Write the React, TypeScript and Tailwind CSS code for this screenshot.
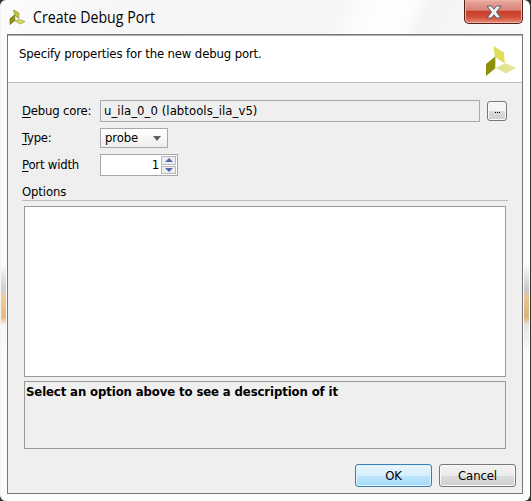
import type { ReactNode } from "react";

function Leaf({ size, small }: { size: number; small?: boolean }) {
  return small ? (
    <svg width={size} height={size} viewBox="0 0 17 17" className="block">
      <path d="M4.5 1 9.8 4 9.8 9.5 6 6.5Z" fill="#c3c633" stroke="#7c7e1e" strokeWidth=".6" />
      <path d="M1 9.5 5.5 6 6 11.5 1 15.5Z" fill="#8f9215" stroke="#62650c" strokeWidth=".6" />
      <path d="M6 12 10.5 10.5 16 12.5 11.5 15Z" fill="#dcdd62" stroke="#8d8f22" strokeWidth=".6" />
    </svg>
  ) : (
    <svg width={size} height={size} viewBox="0 0 31 31" className="block">
      <path d="M7.3 0 18 6.5 18.8 17.5 9 11Z" fill="#dedf58" />
      <path d="M0 18 9.3 10.5V22.2L0 30Z" fill="#8d8f0b" />
      <path d="M9.5 22 19.5 17 30 22 20 27.5Z" fill="#e4e594" />
    </svg>
  );
}

function Label({ hot, children }: { hot?: string; children: ReactNode }) {
  return (
    <span className="w-[78px] shrink-0 tracking-[-0.2px] whitespace-nowrap">
      {hot && <span className="underline underline-offset-2">{hot}</span>}
      {children}
    </span>
  );
}

export default function App() {
  return (
    <div className="flex h-[501px] w-[531px] flex-col overflow-hidden bg-[#333] font-['DejaVu_Sans_Condensed','DejaVu_Sans',sans-serif] text-[13px] leading-4 tracking-[-0.14px] text-black">
      <div className="relative flex h-[501px] w-[530px] flex-col rounded-[6px] border-l border-[#f4f4f4] bg-[#fcfcfc] pr-[7px] pl-[6px]">
        <div className="absolute top-[265px] left-0 h-[90px] w-[5px] bg-[linear-gradient(#fcfcfc,#eaeaea_8px,#cfcfcf_25px,#efcf98_32px,#e8b87a_52px,#f5f5f5_60px,#fcfcfc)]" />
        <div className="absolute top-[265px] right-[1px] h-[90px] w-[5px] bg-[linear-gradient(#fcfcfc,#eaeaea_8px,#c8c8c8_25px,#e8c494_32px,#deb27b_52px,#e5e5e5_60px,#fcfcfc)]" />
        <header className="flex h-[34px] shrink-0 items-start bg-[linear-gradient(115deg,#fcfcfc_0%,#f7f7f7_20%,#f5f5f5_62%,#fdfdfd_69%,#fdfdfd_77%,#f3f5f3_80%,#f8f8f8_100%)] pt-[9px] pl-[2px]">
          <Leaf size={17} small />
          <h1 className="mt-[-1px] ml-[7px] w-[140px] origin-left scale-x-[0.885] font-['Open_Sans','Noto_Sans',sans-serif] text-[16px] leading-[18px] tracking-normal whitespace-nowrap">
            Create Debug Port
          </h1>
          <button aria-label="Close" className="mt-[-9px] mr-0 ml-auto flex h-[24px] w-[59px] items-center justify-center rounded-b-[5px] border border-t-0 border-[#54201b] bg-[linear-gradient(#e9aca3_0,#d98074_45%,#c63c27_48%,#d2503a_75%,#e98b70_100%)] shadow-[inset_0_0_0_1px_#eeb3a7]">
            <svg width="16" height="14" viewBox="0 0 16 14">
              <path d="M1 1H5.5L8 4.2 10.5 1H15L10.5 7 15 13H10.5L8 9.8 5.5 13H1L5.5 7Z" fill="#f1f1f1" stroke="#595b68" />
            </svg>
          </button>
        </header>
        <main className="flex h-[460px] w-[516px] shrink-0 flex-col border border-[#777] bg-[#efefef]">
          <section className="flex h-[48px] shrink-0 items-start border-t border-b border-t-[#b0b0b0] border-b-[#c0c0c0] bg-white pt-[10px] pl-[11px]">
            <p className="whitespace-nowrap">Specify properties for the new debug port.</p>
            <div className="mr-[5px] ml-auto">
              <Leaf size={31} />
            </div>
          </section>
          <section className="flex flex-col pt-[17px] pl-[14px]">
            <div className="flex h-[22px] items-center">
              <Label hot="D">ebug core:</Label>
              <div className="flex h-[22px] w-[380px] items-center border border-[#a8a8ac] pl-[3px] tracking-[0.05px]">u_ila_0_0 (labtools_ila_v5)</div>
              <button className="ml-[7px] flex h-[20px] w-[20px] items-center justify-center gap-px rounded-[3px] border border-[#777] bg-[linear-gradient(#f5f5f5_0_50%,#dadada_50%,#cfcfcf)] pt-[3px] shadow-[inset_0_0_0_1px_#fafafa]">
                <i className="size-px bg-black" /><i className="size-px bg-black" /><i className="size-px bg-black" />
              </button>
            </div>
            <div className="mt-[6px] flex h-[20px] items-center">
              <Label hot="T">ype:</Label>
              <div className="flex h-[20px] w-[68px] items-center justify-between border border-[#a8a8ac] bg-[linear-gradient(#fff,#eee)] pr-[6px] pl-[4px]">
                probe
                <svg width="8" height="5"><path d="M0 0H8L4 5Z" fill="#606060" /></svg>
              </div>
            </div>
            <div className="mt-[6px] flex h-[22px] items-center">
              <Label hot="P">ort width</Label>
              <div className="flex h-[22px] w-[78px] items-center justify-end border border-[#a8a8ac] bg-white pr-px">
                <span className="mr-[2px]">1</span>
                <div className="flex h-[18px] w-[15px] flex-col gap-px">
                  <button className="flex flex-1 items-center justify-center border border-[#b7b7b7] bg-[#eee]">
                    <svg width="8" height="4"><path d="M0 4 4 0 8 4Z" fill="#5366ad" /></svg>
                  </button>
                  <button className="flex flex-1 items-center justify-center border border-[#b7b7b7] bg-[#eee]">
                    <svg width="8" height="4"><path d="M0 0H8L4 4Z" fill="#5366ad" /></svg>
                  </button>
                </div>
              </div>
            </div>
            <h2 className="mt-[8px] h-[17px] w-[486px] border-b border-[#bcbcbc]">Options</h2>
          </section>
          <div className="mt-[5px] ml-[16px] h-[171px] w-[482px] shrink-0 border border-[#999] bg-white" />
          <div className="mt-[4px] ml-[16px] h-[68px] w-[482px] shrink-0 border border-[#999] pt-[2px] pl-px font-bold tracking-[-0.11px] whitespace-nowrap">
            Select an option above to see a description of it
          </div>
          <footer className="mt-[15px] flex gap-[7px] pl-[347px]">
            <button className="h-[23px] w-[77px] rounded-[3px] border border-[#3d7fb1] bg-[linear-gradient(#e9f5fd_0,#d6effc_50%,#bde5fc_52%,#a5daf8)] shadow-[inset_0_0_0_1px_#ddf4ff]">OK</button>
            <button className="h-[23px] w-[77px] rounded-[3px] border border-[#777] bg-[linear-gradient(#f3f3f3_0,#ebebeb_50%,#dcdcdc_52%,#cfcfcf)] shadow-[inset_0_0_0_1px_#f8f8f8]">Cancel</button>
          </footer>
        </main>
      </div>
    </div>
  );
}
